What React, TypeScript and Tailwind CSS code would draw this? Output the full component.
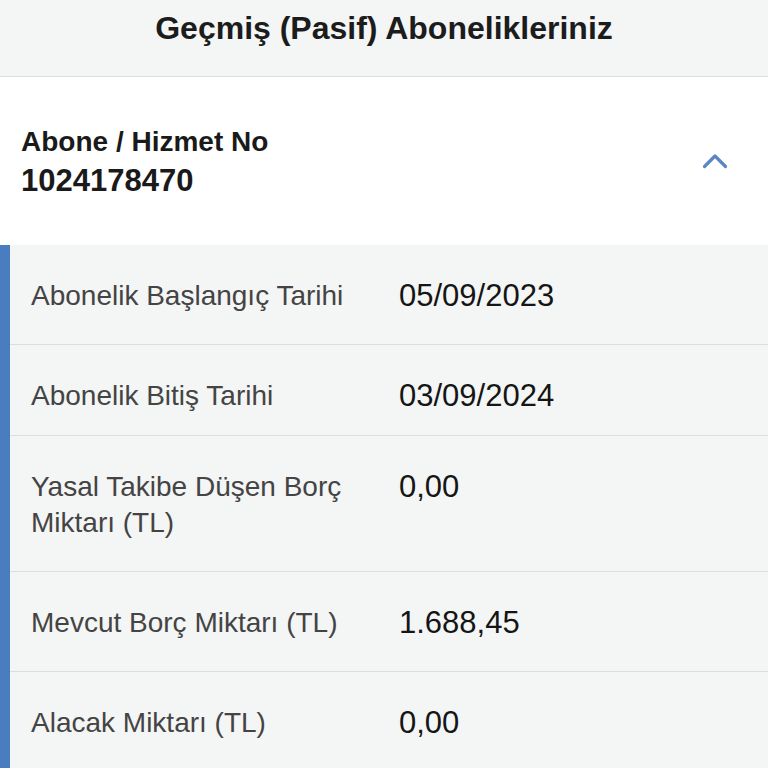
const ROWS = [
  { label: "Abonelik Başlangıç Tarihi", value: "05/09/2023", pb: "pb-[30px]" },
  { label: "Abonelik Bitiş Tarihi", value: "03/09/2024", pb: "pb-[21px]" },
  { label: "Yasal Takibe Düşen Borç Miktarı (TL)", value: "0,00", pb: "pb-[30px]" },
  { label: "Mevcut Borç Miktarı (TL)", value: "1.688,45", pb: "pb-[30px]" },
  { label: "Alacak Miktarı (TL)", value: "0,00", pb: "pb-[30px]" },
];

export default function App() {
  return (
    <div className="w-[768px] h-[768px] overflow-hidden bg-[#f4f5f5] font-['Liberation_Sans',Arial,sans-serif]">
      {/* Page title */}
      <div className="h-[77px] border-b border-[#dcdddd] bg-[#f4f5f5] pt-[9px] text-center">
        <h1 className="text-[32px] leading-[38px] font-bold text-[#1c1c1c]">
          Geçmiş (Pasif) Abonelikleriniz
        </h1>
      </div>

      {/* Accordion header */}
      <div className="h-[168px] bg-white flex items-center justify-between pl-[21px] pr-[40px]">
        <div className="font-bold text-[#1a1a1a]">
          <div className="text-[28px] leading-[39px]">Abone / Hizmet No</div>
          <div className="text-[31px] leading-[39px]">1024178470</div>
        </div>
        <svg width="26" height="16" viewBox="0 0 26 16" fill="none" stroke="#5a86c4" strokeWidth="3.2" strokeLinecap="round" strokeLinejoin="round">
          <path d="M2.5 13.5L13 3L23.5 13.5" />
        </svg>
      </div>

      {/* Details */}
      <div className="flex">
        <div className="w-[10px] bg-[#4a7cc0] shrink-0" />
        <div className="flex-1 flex flex-col">
          {ROWS.map((row) => (
            <div
              key={row.label}
              className={`flex items-start border-b border-[#dcdddd] pt-[33px] ${row.pb}`}
            >
              <div className="w-[389px] shrink-0 pl-[21px] pr-[20px] text-[28px] leading-[36px] text-[#444444]">
                {row.label}
              </div>
              <div className="text-[31px] leading-[36px] text-[#151515]">{row.value}</div>
            </div>
          ))}
        </div>
      </div>
    </div>
  );
}
